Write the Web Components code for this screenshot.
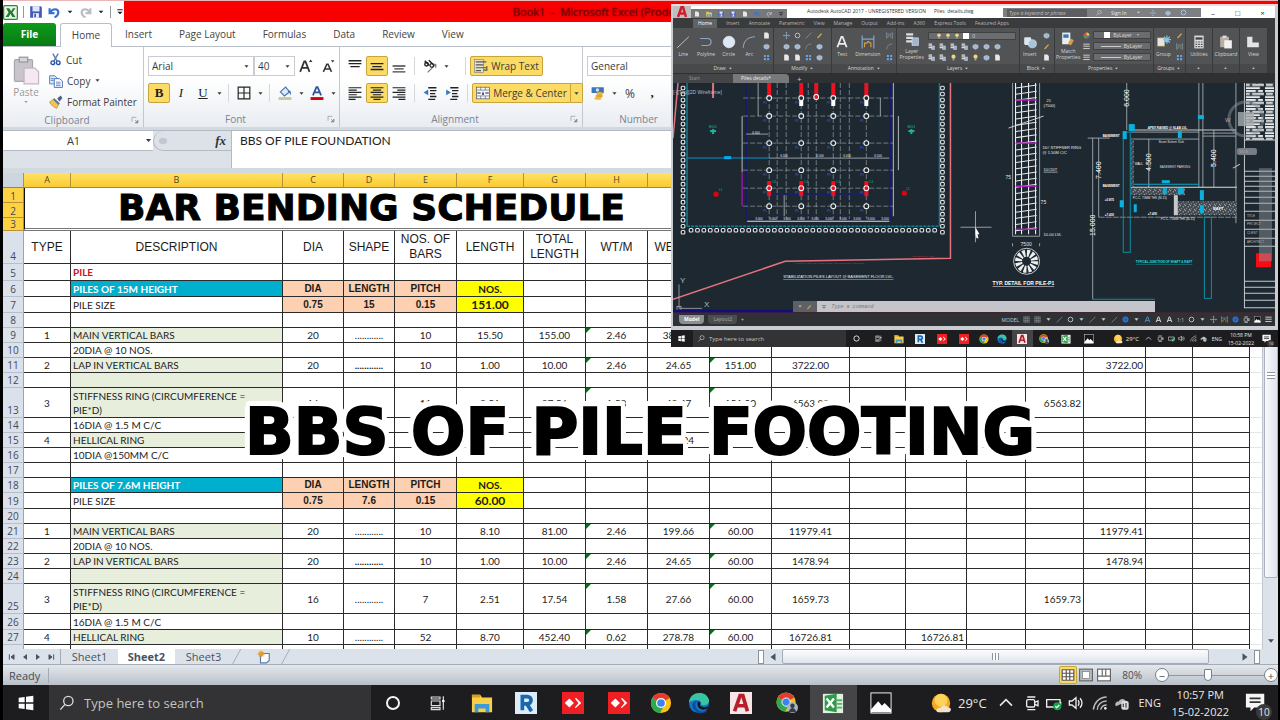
<!DOCTYPE html>
<html lang="en">
<head>
<meta charset="utf-8">
<title>Book1 - Microsoft Excel</title>
<style>
  body {
    margin: 0;
    padding: 0 2px 0 3px;
    box-sizing: border-box;
    height: 100vh;
    position: relative;
    display: flex;
    flex-direction: column;
    overflow: hidden;
    background: #000;
    font-family: "Open Sans", "Noto Sans", sans-serif;
    font-size: 10px;
    color: #3c3c3c;
  }
  sheet-grid { flex: 1; min-height: 0; }
</style>
</head>
<body>
  <title-bar></title-bar>
  <excel-ribbon></excel-ribbon>
  <formula-bar></formula-bar>
  <sheet-grid></sheet-grid>
  <sheet-tabs></sheet-tabs>
  <status-bar></status-bar>
  <task-bar time="10:57 PM"></task-bar>
  <cad-window></cad-window>
  <banner-title>BBS OF PILE FOOTING</banner-title>

<script>
const ICONS = {
  excel: '<rect x="1" y="1" width="22" height="22" rx="2" fill="#e9f5e4" stroke="#2c8a3c" stroke-width="2"/><path d="M5 5h5l3 5 3-5h4l-5 7 5 7h-5l-3-5-3 5H4l5-7z" fill="#1f7a32"/>',
  save: '<path d="M2 2h18l2 2v18H2z" fill="#4558b8"/><rect x="6" y="2" width="12" height="9" fill="#dfe6fa"/><rect x="7" y="14" width="10" height="8" fill="#e8eeff"/><rect x="9" y="15" width="3" height="6" fill="#4558b8"/>',
  undo: '<path d="M3 4v9h9M4 12C8 4 19 4 19 12c0 5-3 7-7 9" fill="none" stroke="#3a6fd0" stroke-width="4"/>',
  redo: '<path d="M21 4v9h-9M20 12C16 4 5 4 5 12c0 5 3 7 7 9" fill="none" stroke="#b9bdc4" stroke-width="4"/>',
  down: '<path d="M5 8h14l-7 8z" fill="currentColor"/>',
  more: '<path d="M4 4h16v3H4zM4 11h16l-8 8z" fill="currentColor"/>',
  paste: '<rect x="2" y="3" width="15" height="18" rx="1" fill="#c8c4cc" stroke="#aaa6b0"/><rect x="6" y="1" width="7" height="4" fill="#d8d6dc" stroke="#99959f"/><path d="M10 10h9l3 3v10H10z" fill="#f4e9f3" stroke="#c3b6c6"/>',
  cut: '<path d="M7 1l8 14M17 1L9 15" stroke="#5c7fae" stroke-width="2.6"/><circle cx="7" cy="18" r="3.4" fill="none" stroke="#2456a8" stroke-width="2.6"/><circle cx="17" cy="18" r="3.4" fill="none" stroke="#2456a8" stroke-width="2.6"/>',
  copy: '<path d="M1 3h9l4 4v10H1z" fill="#dbe8fb" stroke="#4a78be" stroke-width="1.5"/><path d="M9 8h9l5 4v11H9z" fill="#fff" stroke="#3867b4" stroke-width="1.5"/><path d="M12 14h8M12 17h8M12 20h8M3 8h5M3 11h5" stroke="#4a78be" stroke-width="1.4"/>',
  painter: '<path d="M14 6l6-5 3 4-5 6z" fill="#4b5f96"/><path d="M9 6l9 8-5 9C8 21 3 17 1 12z" fill="#f2c64c" stroke="#a67a20"/><path d="M9 6l9 8-2 3-9-9z" fill="#5c75b5"/>',
  border: '<path d="M2 2h20v20H2zM12 2v20M2 12h20" fill="none" stroke="#222" stroke-width="2"/>',
  fill: '<path d="M4 10l9-8 7 8-9 7z" fill="#dfeaf8" stroke="#4a74ae" stroke-width="2"/><path d="M18 7c4 1 5 4 4 9-2-3-2-6-5-6z" fill="#3b78c4"/><rect x="1" y="19" width="22" height="5" fill="#cdc79a"/>',
  fontcolor: '<path d="M5 16L11 2h2l6 14M8 11h8" fill="none" stroke="#2f5597" stroke-width="3"/><rect x="1" y="19" width="22" height="5" fill="#d9000d"/>',
  grow: '<path d="M2 22L9 4h2l7 18M5 15h10" fill="none" stroke="#333" stroke-width="3"/><path d="M17 5l3-4 3 4z" fill="#333"/>',
  shrink: '<path d="M4 22l6-13h2l6 13M7 17h8" fill="none" stroke="#333" stroke-width="2.6"/><path d="M17 2h6l-3 4z" fill="#333"/>',
  top: '<path d="M1 3h22M1 8h22M4 13h16" stroke="#222" stroke-width="2.4"/>',
  middle: '<path d="M1 8h22M4 13h16M1 18h22" stroke="#222" stroke-width="2.4"/>',
  bottom: '<path d="M1 12h22M4 17h16M1 22h22" stroke="#444" stroke-width="2.4"/>',
  left: '<path d="M1 3h22M1 7h14M1 11h22M1 15h14M1 19h22M1 23h12" stroke="#222" stroke-width="2"/>',
  center: '<path d="M1 3h22M5 7h14M1 11h22M5 15h14M1 19h22M6 23h12" stroke="#222" stroke-width="2"/>',
  right: '<path d="M1 3h22M9 7h14M1 11h22M9 15h14M1 19h22M11 23h12" stroke="#222" stroke-width="2"/>',
  orient: '<path d="M8 23L22 9m0 0v6m0-6h-6" fill="none" stroke="#777" stroke-width="2"/><circle cx="6" cy="9" r="3" fill="none" stroke="#222" stroke-width="2.4"/><path d="M3 3l8 8M10 2l7 7" stroke="#222" stroke-width="2.4"/><circle cx="15" cy="11" r="3" fill="none" stroke="#222" stroke-width="2"/>',
  outdent: '<path d="M9 3h14M12 8h11M12 13h9M12 18h11M9 23h12" stroke="#222" stroke-width="2.4"/><path d="M9 6v10l-8-5z" fill="#3777b8"/>',
  indent: '<path d="M9 3h14M12 8h11M12 13h9M12 18h11M9 23h12" stroke="#222" stroke-width="2.4"/><path d="M2 6v10l8-5z" fill="#3777b8"/>',
  wrap: '<rect x="1" y="1" width="15" height="22" fill="#e8e3cc" stroke="#777"/><path d="M3 5h18M3 10h13M3 15h18M3 20h9" stroke="#555" stroke-width="2"/><path d="M22 12v7h-6" fill="none" stroke="#555" stroke-width="2"/>',
  merge: '<rect x="1" y="2" width="22" height="20" fill="#f6f8fc" stroke="#345"/><path d="M1 7h22M1 17h22M8 2v5M16 2v5M8 17v5M16 17v5" stroke="#456"/><path d="M2 12h6M16 12h6" stroke="#224" stroke-width="2"/><path d="M10 15l2-6 2 6z" fill="#225"/>',
  currency: '<rect x="1" y="2" width="21" height="10" rx="1" fill="#3c74bd"/><circle cx="11" cy="7" r="3" fill="#cfe0f8"/><ellipse cx="15" cy="13" rx="6" ry="2.6" fill="#f0b93c"/><ellipse cx="14" cy="17" rx="6" ry="2.6" fill="#e3a526"/><ellipse cx="12" cy="21" rx="6" ry="2.6" fill="#f0b93c"/>',
  launch: '<path d="M3 17V4h13" fill="none" stroke="#8a929c" stroke-width="2"/><path d="M21 12v9h-9zM12 12l6 6" fill="#8a929c" stroke="#8a929c" stroke-width="2"/>',
  windows: '<path d="M1 4l9-1v8H1zM12 2.600l11-1.600v10H12zM1 13h9v8l-9-1zM12 13h11v10l-11-1.600z" fill="#fff"/>',
  search: '<circle cx="14" cy="9" r="7" fill="none" stroke="#ddd" stroke-width="2"/><path d="M9 14l-7 8" stroke="#ddd" stroke-width="2"/>',
  cortana: '<circle cx="12" cy="12" r="9" fill="none" stroke="#f2f2f2" stroke-width="3"/>',
  taskview: '<path d="M2 3h13v3H2zM2 9h13v7H2zM2 19h13v3H2z" fill="none" stroke="#ddd" stroke-width="1.800"/><path d="M20 2v20" stroke="#ddd" stroke-width="1.800"/><circle cx="20" cy="9" r="2" fill="#fff"/>',
  folder: '<path d="M1 3h9l2 3h11v16H1z" fill="#f9cf4a"/><path d="M1 3h9v3H1z" fill="#d99c1d"/><path d="M4 22v-9h16v9h-4v-4H8v4z" fill="#3d9ad6"/>',
  revit: '<rect width="24" height="24" fill="#dcecf9"/><path d="M8 20V5h5.500a4 4 0 010 8H9m4 0l5 8" fill="none" stroke="#1b67ad" stroke-width="4"/>',
  anydesk: '<rect width="24" height="24" fill="#f01f24"/><path d="M8 7l5 5-5 5-5-5z" fill="#fff"/><path d="M14 7l1.500-.5L21 12l-6 5.500-1-.5 4-5z" fill="#fff"/>',
  chrome: '<circle cx="12" cy="12" r="11" fill="#fbc116"/><path d="M12 12L2.500 6.500A11 11 0 0121.500 6.500z" fill="#e33b2e"/><path d="M12 12L2.500 6.500A11 11 0 0011 23l5-9z" fill="#2da94f"/><circle cx="12" cy="12" r="5.500" fill="#fff"/><circle cx="12" cy="12" r="4.200" fill="#3c82f0"/>',
  profile: '<circle cx="11" cy="11" r="10.500" fill="#fbc116"/><path d="M11 11L2 6A10.500 10.500 0 0120 6z" fill="#e33b2e"/><path d="M11 11L2 6a10.500 10.500 0 008 15.500l4-8z" fill="#2da94f"/><circle cx="11" cy="11" r="4.500" fill="#3c82f0" stroke="#fff"/><circle cx="18" cy="17" r="6" fill="#aab6c4"/><circle cx="18" cy="15" r="2.400" fill="#343c48"/><path d="M14 22c1-6 7-6 8 0z" fill="#343c48"/>',
  edge: '<circle cx="12" cy="12" r="11" fill="#1574c8"/><path d="M1 11C3-2 21-2 23 9c0 5-5 6-9 5 2-4-3-8-13-3z" fill="#38c5a0"/><path d="M8 14c1 7 7 9 13 6-4 6-14 3-16-4-1-4 2-7 5-6-1 1-2 2-2 4z" fill="#0b4f9c"/><path d="M11 10c3 1 3 3 2 5 3 2 7 2 10 0-2 5-9 6-12 1-1-2-1-4 0-6z" fill="#15191f"/>',
  autocad: '<rect width="24" height="24" fill="#f6e6e6"/><path d="M5 21L11 4h3l5 17M7 15h10" fill="none" stroke="#b3202c" stroke-width="4"/>',
  cadlogo: '<path d="M4 22L11 2h3l6 20M7 15h10" fill="none" stroke="#d01f2c" stroke-width="5"/>',
  sheets: '<path d="M1 2h22v21H1z" fill="#dff1df"/><path d="M3 4l13-2v20L3 20z" fill="#2e9b48"/><path d="M5 7l8 10M13 7L5 17" stroke="#fff" stroke-width="2.600"/><path d="M16 9h6M16 13h6M16 17h6" stroke="#5bb06b" stroke-width="2"/>',
  photos: '<rect x="1" y="1" width="22" height="22" fill="#16181c" stroke="#fff"/><path d="M1 22v-3l8-9 4 5 3-3 7 7v3z" fill="#fff"/>',
  sun: '<circle cx="12" cy="12" r="10" fill="#f6a91e"/><circle cx="12" cy="9" r="7" fill="#ffd25a"/><path d="M12 17c2-3 6-3 8 0h1c3 1 2 5-1 5H9c-3 0-3-5 3-5z" fill="#f1e4c8"/>',
  chevron: '<path d="M3 16l9-9 9 9" fill="none" stroke="#e8e8e8" stroke-width="2.400"/>',
  camera: '<rect x="4" y="7" width="12" height="11" rx="2" fill="none" stroke="#eee" stroke-width="2"/><path d="M16 11l5-2v7l-5-2M5 3h12M5 22h12" fill="none" stroke="#eee" stroke-width="2"/>',
  battery: '<path d="M1 7h20v11H1zM22 10v5" fill="none" stroke="#eee" stroke-width="2"/><circle cx="17" cy="17" r="6" fill="#18a04a"/><path d="M14 17l2 2 4-4" fill="none" stroke="#fff" stroke-width="2"/>',
  sound: '<path d="M2 9h4l6-5v16l-6-5H2z" fill="none" stroke="#eee" stroke-width="2"/><path d="M15 8c2 2 2 6 0 8M18 5c4 4 4 10 0 14" fill="none" stroke="#eee" stroke-width="2"/>',
  wifi: '<path d="M2 22C3 12 11 3 22 3M8 22c0-7 6-13 14-13M13 22c1-4 4-7 9-7" fill="none" stroke="#bbb" stroke-width="2.200"/><circle cx="20" cy="20" r="2" fill="#eee"/>',
  cloud: '<path d="M3 17c-3-4 1-8 4-7 2-6 10-5 11 0" fill="#b8b8b8"/><rect x="11" y="9" width="11" height="13" rx="3" fill="#ddd"/><path d="M14 13v5M18 12v7" stroke="#555" stroke-width="2"/>',
  notice: '<path d="M1 2h20v15H10l-4 4v-4H1z" fill="#f5f5f5"/><path d="M5 7h12M5 11h12" stroke="#333" stroke-width="2"/>',
  first: '<path d="M4 4v16M18 5v14l-9-7z" fill="currentColor" stroke="currentColor" stroke-width="3"/>',
  prev: '<path d="M18 3v18L6 12z" fill="currentColor"/>',
  next: '<path d="M6 3v18l12-9z" fill="currentColor"/>',
  last: '<path d="M20 4v16M6 5v14l9-7z" fill="currentColor" stroke="currentColor" stroke-width="3"/>',
  newsheet: '<path d="M6 6h15v12l-5 4H6z" fill="#fff" stroke="#5a79b4" stroke-width="2"/><path d="M7 1v12M1 7h12M3 3l8 8M11 3l-8 8" stroke="#e69a28" stroke-width="2"/>',
  slant: '<path d="M1 24L14 0" stroke="#a4abb6" stroke-width="1.500"/>',
  normal: '<path d="M2 3h20v18H2zM2 9h20M2 15h20M9 3v18M15 3v18" fill="#fff" stroke="#555" stroke-width="2"/>',
  page: '<rect x="1" y="2" width="22" height="20" fill="#b8bcc4" stroke="#666" stroke-width="2"/><rect x="6" y="6" width="12" height="12" fill="#fff" stroke="#666"/>',
  breaks: '<rect x="1" y="2" width="22" height="20" fill="#fff" stroke="#666" stroke-width="2"/><path d="M9 2v12M15 2v12M1 14h22" stroke="#666" stroke-width="2"/>',
  line: '<path d="M2 22L22 3" stroke="#ccc" stroke-width="1.500"/>',
  polyline: '<path d="M2 6h12c9 0 9 12 0 12H4" fill="none" stroke="#8ba6c4" stroke-width="2"/>',
  circle: '<circle cx="12" cy="12" r="10" fill="#dce8f5" stroke="#fff"/>',
  arc: '<path d="M2 22C3 9 10 4 22 3" fill="none" stroke="#9ab2cc" stroke-width="1.600"/>',
  letter: '<path d="M4 21L11 3h2l7 18M7 15h10" fill="none" stroke="#eee" stroke-width="3"/>',
  person: '<path d="M4 21L11 3h2l7 18M7 15h10" fill="none" stroke="#4a9ae0" stroke-width="3"/>',
  dimension: '<path d="M2 1v22M22 1v22M2 7h20" fill="none" stroke="#7da7cf" stroke-width="2"/><path d="M6 21v-7h4l2-3 5 3v7" fill="none" stroke="#d89d3c" stroke-width="2"/>',
  layers: '<path d="M2 2h12v4H2zM2 8h12v4H2zM2 14h12v4H2z" fill="#ddd"/><path d="M12 10h11v13H12z" fill="#9db6d2" stroke="#eee"/>',
  insert: '<rect x="2" y="4" width="12" height="13" rx="2" fill="#dce6f0"/><circle cx="16" cy="15" r="7" fill="#a7c3de" stroke="#eee"/>',
  match: '<rect x="2" y="1" width="14" height="20" fill="#e9eef4"/><rect x="4" y="4" width="9" height="6" fill="#3d77b5"/><path d="M12 19l5-8 5 3-5 9z" fill="#d6a04a"/>',
  group: '<rect x="1" y="5" width="12" height="14" fill="#e6e6e6" stroke="#d0a84a"/><path d="M17 1v14M10 8h14M12 3l10 10M22 3L12 13" stroke="#7ec8f0" stroke-width="2"/>',
  calc: '<rect x="4" y="1" width="16" height="22" fill="#ddd"/><path d="M6 4h12v4H6z" fill="#445"/><path d="M6 12h12M6 16h12M6 20h12" stroke="#555" stroke-width="2" stroke-dasharray="3 1.500"/>',
  clip: '<rect x="2" y="3" width="15" height="18" fill="#b8aea4"/><rect x="6" y="1" width="7" height="4" fill="#ddd"/><path d="M9 9h13v14H9z" fill="#f2f2f2"/>',
  view: '<path d="M2 3h9v10h11v8H2z" fill="#e4e4e4"/>',
  cube: '<path d="M3 8l9-4 9 4v9l-9 5-9-5z" fill="#9fb9d4" stroke="#e8eef5"/>',
  doc: '<path d="M4 2h11l5 5v15H4z" fill="#e8e8e8"/>',
  pencil: '<path d="M3 20L17 4l4 3L8 21z" fill="#d2a24c"/>',
  move: '<path d="M12 1v22M1 12h22M9 4l3-3 3 3M9 20l3 3 3-3M4 9l-3 3 3 3M20 9l3 3-3 3" fill="none" stroke="#9cc0e2" stroke-width="2"/>',
  ring: '<circle cx="12" cy="12" r="8" fill="none" stroke="#b6cde4" stroke-width="3"/>',
  bulb: '<circle cx="12" cy="9" r="7" fill="#f3d778"/><rect x="9" y="15" width="6" height="7" fill="#aaa"/>',
  grid: '<path d="M3 3h7v7H3zM14 3h7v7h-7zM3 14h7v7H3zM14 14h7v7h-7z" fill="#6ba4dc"/>',
  snap: '<path d="M3 2v20M9 2v20M15 2v20M21 2v20M2 3h20M2 9h20M2 15h20M2 21h20" stroke="#8c8f92" stroke-width="2"/>',
  lines: '<path d="M1 4h22M1 11h22M1 19h22" stroke="#ddd" stroke-width="3"/>',
  blue: '<circle cx="12" cy="12" r="9" fill="#1b62c4" stroke="#2b85f0" stroke-width="3"/>',
  wheel: '<circle cx="12" cy="12" r="10" fill="#d94b40"/><path d="M12 12L2 12A10 10 0 0012 22z" fill="#4ba04d"/><path d="M12 12v10a10 10 0 0010-10z" fill="#3d78d0"/><path d="M12 2a10 10 0 0110 10H12z" fill="#f3c43a"/>'
};

const icon = (name, size) =>
  `<svg class="i" viewBox="0 0 24 24" aria-hidden="true"${size ? ` style="width:${size}px;height:${size}px"` : ''}>${ICONS[name]}</svg>`;

const BASE = `
  :host, * { box-sizing: border-box; }
  button, input, select, textarea {
    font: inherit; color: inherit; margin: 0; padding: 0;
    border: 0; background: none; border-radius: 0; outline: 0;
  }
  select { appearance: none; }
  .i { width: 14px; height: 14px; flex: none; display: block; }
`;

class UiElement extends HTMLElement {
  constructor() {
    super();
    this.attachShadow({ mode: 'open' });
  }

  connectedCallback() {
    this.shadowRoot.innerHTML = `<style>${BASE}${this.css()}</style>${this.html()}`;
  }
}

// Title bar with the quick access tools
class TitleBar extends UiElement {
  css() {
    return `
      :host { display: flex; height: 23px; background: #fff; border-top: 1px solid #e9b5b5; }
      .tools { width: 121px; display: flex; align-items: center; gap: 5px; color: #222; }
      .bar { width: 1px; height: 12px; background: #999; }
      .title {
        flex: 1; height: 21px; padding-left: 389px; background: #f80000; color: #780000;
        font: 11px/22px "Open Sans", sans-serif; white-space: nowrap; text-shadow: 0 0 2px #780000;
      }
    `;
  }

  html() {
    return `
      <div class="tools">${icon('excel', 15)}<span class="bar"></span>${icon('save')}${icon('undo', 13)}${icon('down', 8)}${icon('redo', 13)}${icon('down', 8)}<span class="bar"></span>${icon('more', 8)}</div>
      <div class="title">Book1 &nbsp;- &nbsp;Microsoft Excel (Product Activation Failed)</div>
    `;
  }
}

// One captioned block of ribbon tools
class RibbonGroup extends UiElement {
  css() {
    return `
      :host { display: flex; flex-direction: column; flex: none; border-right: 1px solid #c3c8cf; }
      .body { flex: 1; display: flex; }
      .foot { height: 17px; display: flex; align-items: center; padding-right: 4px; color: #7b8594; }
      .name { flex: 1; text-align: center; }
    `;
  }

  html() {
    return `
      <div class="body"><slot></slot></div>
      <div class="foot"><span class="name">${this.getAttribute('label')}</span>${icon('launch', 8)}</div>
    `;
  }
}

class ExcelRibbon extends UiElement {
  css() {
    return `
      :host { display: block; background: #fff; }
      nav { display: flex; height: 24px; align-items: stretch; border-bottom: 1px solid #b9bfc8; }
      nav a { color: #444; text-decoration: none; line-height: 23px; text-align: center; }
      .file { width: 53px; margin-right: 4px; background: linear-gradient(#0e9a1c, #087a12); color: #fff; font-weight: bold; border-radius: 3px 3px 0 0; }
      .home { width: 52px; border: 1px solid #b9bfc8; border-bottom: 0; border-radius: 3px 3px 0 0; background: #fff; height: 24px; }
      .tabs { display: flex; gap: 27px; padding-left: 13px; }
      .groups { display: flex; height: 80px; background: linear-gradient(#fff 40%, #e9ecf1); }
      button { display: flex; align-items: center; justify-content: center; gap: 3px; height: 20px; white-space: nowrap; }
      .paste { width: 46px; height: 60px; flex-direction: column; margin-top: 3px; color: #999; gap: 0; }
      .clip { display: flex; flex-direction: column; padding-top: 2px; }
      .clip button { justify-content: flex-start; gap: 4px; height: 21px; }
      .tools { display: flex; flex-direction: column; gap: 7px; padding: 9px 4px 0 4px; }
      .row { display: flex; height: 20px; align-items: center; }
      .row button { width: 22px; }
      .row button.tiny { width: 10px; }
      .row button.on { background: #fbdb63; border: 1px solid #c9a33c; border-radius: 2px; }
      .row button.wide { width: 73px; }
      .row button.merge { width: 99px; border-radius: 2px 0 0 2px; }
      .row button.drop { width: 12px; border-left: 0; border-radius: 0 2px 2px 0; }
      .sep { width: 1px; height: 18px; background: #d4d7dc; margin: 0 4px; }
      .box { display: flex; align-items: center; height: 20px; border: 1px solid #c9cdd3; background: #fff; padding: 0 3px; }
      .box select { flex: 1; min-width: 0; }
      .serif { font: 13px "Liberation Serif", serif; color: #222; }
    `;
  }

  html() {
    const drop = label => `<button class="tiny" aria-label="${label} options">${icon('down', 7)}</button>`;
    const tool = (name, label, on) => `<button class="${on ? 'on' : ''}" aria-label="${label}">${icon(name)}</button>`;
    return `
      <nav>
        <a class="file" href="#">File</a><a class="home" href="#">Home</a>
        <div class="tabs"><a href="#">Insert</a><a href="#">Page Layout</a><a href="#">Formulas</a><a href="#">Data</a><a href="#">Review</a><a href="#">View</a></div>
      </nav>
      <div class="groups">
        <ribbon-group label="Clipboard" style="width:141px">
          <button class="paste">${icon('paste', 29)}<span>Paste</span>${icon('down', 6)}</button>
          <div class="clip">
            <button>${icon('cut', 13)}Cut</button>
            <button>${icon('copy')}Copy ${icon('down', 7)}</button>
            <button>${icon('painter')}Format Painter</button>
          </div>
        </ribbon-group>
        <ribbon-group label="Font" style="width:196px">
          <div class="tools">
            <div class="row">
              <label class="box" style="width:106px"><select aria-label="Font name"><option>Arial</option></select>${icon('down', 7)}</label>
              <label class="box" style="width:41px"><select aria-label="Font size"><option>40</option></select>${icon('down', 7)}</label>
              ${tool('grow', 'Grow font')}${tool('shrink', 'Shrink font')}
            </div>
            <div class="row">
              <button class="on serif"><b>B</b></button><button class="serif"><i>I</i></button><button class="serif"><u>U</u></button>${drop('Underline')}
              <span class="sep"></span>${tool('border', 'Borders')}${drop('Borders')}
              <span class="sep"></span>${tool('fill', 'Fill colour')}${drop('Fill')}${tool('fontcolor', 'Font colour')}${drop('Font colour')}
            </div>
          </div>
        </ribbon-group>
        <ribbon-group label="Alignment" style="width:243px">
          <div class="tools">
            <div class="row">
              ${tool('top', 'Top align')}${tool('middle', 'Middle align', true)}${tool('bottom', 'Bottom align')}
              <span class="sep"></span>${tool('orient', 'Orientation')}${drop('Orientation')}<span style="width:10px"></span>
              <span class="sep"></span><button class="on wide">${icon('wrap')}Wrap Text</button>
            </div>
            <div class="row">
              ${tool('left', 'Align left')}${tool('center', 'Centre', true)}${tool('right', 'Align right')}
              <span class="sep"></span>${tool('outdent', 'Decrease indent')}${tool('indent', 'Increase indent')}
              <span class="sep"></span><button class="on merge">${icon('merge')}Merge &amp; Center</button><button class="on drop" aria-label="Merge options">${icon('down', 7)}</button>
            </div>
          </div>
        </ribbon-group>
        <ribbon-group label="Number" style="width:124px">
          <div class="tools">
            <div class="row"><label class="box" style="width:112px"><select aria-label="Number format"><option>General</option></select>${icon('down', 7)}</label></div>
            <div class="row">${tool('currency', 'Currency')}${drop('Currency')}<button style="font-size:12px">%</button><button class="serif"><b>,</b></button></div>
          </div>
        </ribbon-group>
      </div>
    `;
  }
}

class FormulaBar extends UiElement {
  css() {
    return `
      :host { display: flex; height: 46px; padding: 3px 0 5px; background: #d3d9e1; }
      .name { width: 229px; display: flex; background: #dde2e9; border-right: 1px solid #b4bac3; border-top: 1px solid #b4bac3; }
      .cell { width: 150px; height: 20px; display: flex; align-items: center; background: #fff; border-bottom: 1px solid #b4bac3; }
      .cell input { flex: 1; min-width: 0; text-align: center; font-size: 11px; }
      .fx { flex: 1; height: 20px; display: flex; align-items: center; justify-content: flex-end; padding-right: 5px; border: 1px solid #b4bac3; border-top: 0; border-right: 0; border-radius: 10px 0 0 10px; font: italic bold 13px "Liberation Serif", serif; color: #333; }
      .fx span { flex: 1; margin-left: 5px; max-width: 8px; height: 6px; border-radius: 4px; background: #c2c8d0; margin-right: auto; }
      textarea { flex: 1; resize: none; overflow: hidden; background: #fff; padding: 1px 8px; font: 12px/17px Lato, sans-serif; color: #222; border-top: 1px solid #b4bac3; }
    `;
  }

  html() {
    return `
      <div class="name">
        <label class="cell"><input aria-label="Name box" value="A1">${icon('down', 9)}</label>
        <div class="fx"><span></span>fx</div>
      </div>
      <textarea aria-label="Formula">BBS OF PILE FOUNDATION</textarea>
    `;
  }
}

const COLUMNS = [47, 212, 61, 51, 62, 67, 62, 62, 62, 62, 78, 56, 61, 59, 58, 62, 47, 57];

// row number: [height, { column: value }]
const ROWS = {
  4: [33, { A: 'TYPE', B: 'DESCRIPTION', C: 'DIA', D: 'SHAPE', E: 'NOS. OF BARS', F: 'LENGTH', G: 'TOTAL LENGTH', H: 'WT/M', I: 'WEIGHT' }],
  5: [17, { B: 'PILE' }],
  6: [16, { B: 'PILES OF 15M HEIGHT', C: 'DIA', D: 'LENGTH', E: 'PITCH', F: 'NOS.' }],
  7: [16, { B: 'PILE SIZE', C: '0.75', D: '15', E: '0.15', F: '151.00' }],
  8: [15, {}],
  9: [15, { A: 1, B: 'MAIN VERTICAL BARS', C: 20, D: '............', E: 10, F: '15.50', G: '155.00', H: '2.46', I: '382.08' }],
  10: [15, { B: '20DIA @ 10 NOS.' }],
  11: [15, { A: 2, B: 'LAP IN VERTICAL BARS', C: 20, D: '............', E: 10, F: '1.00', G: '10.00', H: '2.46', I: '24.65', J: '151.00', K: '3722.00', P: '3722.00' }],
  12: [15, {}],
  13: [30, { A: 3, B: 'STIFFNESS RING (CIRCUMFERENCE = PIE*D)', C: 16, D: '............', E: 11, F: '2.51', G: '27.56', H: '1.58', I: '43.47', J: '151.00', K: '6563.82', O: '6563.82' }],
  14: [15, { B: '16DIA @ 1.5 M C/C' }],
  15: [15, { A: 4, B: 'HELLICAL RING', I: '550.24' }],
  16: [15, { B: '10DIA @150MM C/C' }],
  17: [15, {}],
  18: [15, { B: 'PILES OF 7.6M HEIGHT', C: 'DIA', D: 'LENGTH', E: 'PITCH', F: 'NOS.' }],
  19: [16, { B: 'PILE SIZE', C: '0.75', D: '7.6', E: '0.15', F: '60.00' }],
  20: [15, {}],
  21: [15, { A: 1, B: 'MAIN VERTICAL BARS', C: 20, D: '............', E: 10, F: '8.10', G: '81.00', H: '2.46', I: '199.66', J: '60.00', K: '11979.41', P: '11979.41' }],
  22: [15, { B: '20DIA @ 10 NOS.' }],
  23: [15, { A: 2, B: 'LAP IN VERTICAL BARS', C: 20, D: '............', E: 10, F: '1.00', G: '10.00', H: '2.46', I: '24.65', J: '60.00', K: '1478.94', P: '1478.94' }],
  24: [15, {}],
  25: [30, { A: 3, B: 'STIFFNESS RING (CIRCUMFERENCE = PIE*D)', C: 16, D: '............', E: 7, F: '2.51', G: '17.54', H: '1.58', I: '27.66', J: '60.00', K: '1659.73', O: '1659.73' }],
  26: [16, { B: '16DIA @ 1.5 M C/C' }],
  27: [15, { A: 4, B: 'HELLICAL RING', C: 10, D: '............', E: 52, F: '8.70', G: '452.40', H: '0.62', I: '278.78', J: '60.00', K: '16726.81', M: '16726.81' }]
};
const GREEN = [9, 11, 12, 13, 15, 21, 23, 24, 25, 27];
const FLAGGED = [9, 11, 13, 21, 23, 25, 27];

class SheetGrid extends UiElement {
  css() {
    return `
      :host { display: flex; background: #fff; overflow: hidden; }
      .pane { flex: 1; min-width: 0; overflow: hidden; }
      table { width: 100%; table-layout: fixed; border-collapse: separate; border-spacing: 0; }
      th, td { padding: 0 2px; overflow: hidden; }
      thead th { height: 15px; background: linear-gradient(#ffe263, #fbcb34); border-right: 1px solid #b8923a; border-bottom: 1px solid #a98532; font-size: 9px; line-height: 14px; font-weight: normal; color: #554726; }
      thead th:first-child { background: #cdd5df; }
      tbody th { background: #dae1ea; border-right: 1px solid #9aa3b0; border-bottom: 1px solid #b6bec9; font-weight: normal; font-size: 10px; line-height: 13px; color: #414a58; vertical-align: bottom; padding: 0; }
      tbody th.on { background: #fdd344; border-color: #b8923a; line-height: 12px; }
      td { border-right: 1px solid #2b2b2b; border-bottom: 1px solid #2b2b2b; text-align: center; vertical-align: middle; font: 10px/14px Lato, sans-serif; color: #1c1c1c; white-space: nowrap; }
      td.B { text-align: left; white-space: normal; padding-right: 16px; }
      td.L, td.M, td.N, td.O, td.P { text-align: right; }
      td.rest { border-right: 0; border-bottom-color: #e4e6ea; }
      td.title { border: 1px solid #111; border-bottom: 3px double #777; border-top: 0; text-align: left; padding-left: 93px; font: bold 36px/38px "DejaVu Sans", sans-serif; -webkit-text-stroke: 1px #000; color: #000; }
      .r4 td, .r4 td.B { font: 12px/15px "Liberation Sans", sans-serif; white-space: normal; text-align: center; padding: 0 2px; }
      .r5 td.B { color: #d01018; font-weight: bold; }
      .head td.C, .head td.D, .head td.E { background: #fcd0b0; font-weight: bold; font-family: "Liberation Sans", sans-serif; }
      .head td.F { background: #ff0; font-weight: bold; }
      .size td.F { font-size: 12px; }
      .name td.B { background: #00aecd; color: #fff; font-weight: bold; }
      .green td.B { background: #e8eedc; }
      .flag td.H, .flag td.J { background: linear-gradient(135deg, #0c6b1c 3px, transparent 4px); }
      .r11 td.D, .r23 td.D { font-weight: bold; }
      .scroll { width: 16px; flex: none; display: flex; flex-direction: column; align-items: center; background: #dde2ea; border-left: 1px solid #c0c6d0; color: #445; }
      .thumb { width: 14px; height: 85%; display: flex; align-items: center; justify-content: center; background: linear-gradient(90deg, #f8f9fc, #dfe4ee); border: 1px solid #aab2c0; border-radius: 2px; }
      .grip { width: 8px; height: 7px; background: repeating-linear-gradient(#8c94a2 0 1px, #fff 1px 3px); }
      .scroll .i { margin-top: auto; margin-bottom: 3px; }
    `;
  }

  html() {
    const letters = COLUMNS.map((w, i) => String.fromCharCode(65 + i));
    const rows = Object.entries(ROWS).map(([n, [height, cells]]) => {
      const row = Number(n);
      const cls = [`r${n}`];
      if ([6, 7, 18, 19].includes(row)) cls.push('head');
      if ([7, 19].includes(row)) cls.push('size');
      if ([6, 18].includes(row)) cls.push('name');
      if (GREEN.includes(row)) cls.push('green');
      if (FLAGGED.includes(row)) cls.push('flag');
      const tds = letters.map(l => `<td class="${l}">${cells[l] ?? ''}</td>`).join('');
      return `<tr class="${cls.join(' ')}" style="height:${height}px"><th>${n}</th>${tds}<td class="rest"></td></tr>`;
    }).join('');
    return `
      <div class="pane"><table>
        <colgroup><col style="width:21px">${COLUMNS.map(w => `<col style="width:${w}px">`).join('')}<col></colgroup>
        <thead><tr><th></th>${letters.map(l => `<th>${l}</th>`).join('')}<th></th></tr></thead>
        <tbody>
          <tr style="height:15px"><th class="on">1</th><td class="title" rowspan="3" colspan="18">BAR BENDING SCHEDULE</td></tr>
          <tr style="height:15px"><th class="on">2</th></tr>
          <tr style="height:13px"><th class="on">3</th></tr>
          ${rows}
          <tr style="height:15px"><th></th>${letters.map(l => `<td class="${l}"></td>`).join('')}<td class="rest"></td></tr>
        </tbody>
      </table></div>
      <div class="scroll"><div class="thumb"><span class="grip"></span></div>${icon('down', 10)}</div>
    `;
  }
}

class SheetTabs extends UiElement {
  css() {
    return `
      :host { display: flex; height: 16px; background: #dbe2ea; color: #4a5260; border-bottom: 1px solid #a4abb6; }
      .left { flex: 755; display: flex; align-items: stretch; }
      .nav { width: 58px; display: flex; align-items: center; justify-content: space-around; padding: 0 2px; border-right: 1px solid #a4abb6; }
      button { font-size: 11px; line-height: 14px; }
      .tab { width: 57px; }
      .on { background: #fff; font-weight: bold; }
      .new { width: 34px; display: flex; align-items: center; justify-content: center; }
      .right { flex: 520; display: flex; align-items: center; gap: 4px; }
      .split { width: 6px; height: 14px; border: 1px solid #8a93a0; background: #fff; }
      .track { flex: 1; display: flex; }
      .thumb { flex: 0 0 94%; height: 15px; border: 1px solid #a4abb6; border-radius: 2px; background: linear-gradient(#fbfcfe, #dfe4ec); display: flex; align-items: center; justify-content: center; }
      .grip { width: 7px; height: 7px; background: repeating-linear-gradient(90deg, #8c94a2 0 1px, #fff 1px 3px); }
      .end { width: 14px; }
    `;
  }

  html() {
    return `
      <div class="left">
        <div class="nav">${icon('first', 8)}${icon('prev', 8)}${icon('next', 8)}${icon('last', 8)}</div>
        <button class="tab">Sheet1</button><button class="tab on">Sheet2</button><button class="tab">Sheet3</button>${icon('slant', 15)}
        <button class="new" aria-label="Insert sheet">${icon('newsheet', 14)}</button>${icon('slant', 15)}
      </div>
      <div class="right">
        <span class="split"></span>${icon('prev', 10)}
        <div class="track"><div class="thumb"><span class="grip"></span></div></div>
        ${icon('next', 10)}<span class="split"></span><span class="end"></span>
      </div>
    `;
  }
}

class StatusBar extends UiElement {
  css() {
    return `
      :host { display: flex; align-items: center; height: 20px; padding: 0 0 0 6px; background: linear-gradient(#e4e8ed, #b9c0c9); color: #454c56; font-size: 11px; }
      .ready { width: 40px; border-right: 1px solid #a4abb6; margin-right: auto; }
      .view { width: 18px; height: 18px; display: flex; align-items: center; justify-content: center; }
      .on { background: #fbdb63; border: 1px solid #c9a33c; border-radius: 2px; }
      .zoom { margin: 0 13px 0 9px; font-size: 10px; }
      .round { width: 14px; height: 14px; border: 1px solid #777f8a; border-radius: 50%; background: #fff; line-height: 11px; text-align: center; }
      input { width: 95px; height: 14px; appearance: none; background: linear-gradient(#8f97a2, #8f97a2) center / 100% 1px no-repeat; }
      input::-webkit-slider-thumb { appearance: none; width: 8px; height: 12px; border: 1px solid #777f8a; background: #fff; border-radius: 1px 1px 4px 4px; }
    `;
  }

  html() {
    return `
      <span class="ready">Ready</span>
      <button class="view on" aria-label="Normal">${icon('normal')}</button><button class="view" aria-label="Page layout">${icon('page')}</button><button class="view" aria-label="Page breaks">${icon('breaks')}</button>
      <span class="zoom">80%</span>
      <button class="round" aria-label="Zoom out">−</button><input type="range" aria-label="Zoom" min="0" max="100" value="40"><button class="round" aria-label="Zoom in">+</button>
    `;
  }
}

// Windows task bar; the small one sits inside the CAD recording
class TaskBar extends UiElement {
  css() {
    return `
      :host {
        display: grid; height: var(--bar, 35px); background: #1d1c1e; color: #e8e8e8; font-size: var(--text, 13px); align-items: stretch;
        grid-template-columns: 46fr 321fr 45fr 44fr 43fr 46fr 47fr 45fr 38fr 39fr 45fr 46fr 47fr 48fr 47fr 40fr 28fr 23fr 21fr 23fr 24fr 21fr 34fr 67fr 44fr;
      }
      .c { display: flex; align-items: center; justify-content: center; white-space: nowrap; min-width: 0; }
      .c .i { width: var(--icon, 22px); height: var(--icon, 22px); }
      .tray .i, .start .i, .find .i { width: var(--tray, 16px); height: var(--tray, 16px); }
      .sun { justify-content: flex-end; }
      .find { background: #333234; justify-content: flex-start; padding-left: 3%; gap: 3%; overflow: hidden; }
      .find input { width: 70%; }
      .find input::placeholder { color: #c4c4c4; opacity: 1; }
      .lit { background: #454446; }
      .lang { font-size: var(--small, 11px); }
      .time { flex-direction: column; font-size: var(--small, 11px); line-height: var(--line, 17px); }
      .note { position: relative; }
      .count {
        position: absolute; left: 50%; bottom: 0; width: var(--tray, 16px); height: var(--tray, 16px); line-height: var(--tray, 16px);
        text-align: center; font-size: var(--count, 10px); background: #3a393b; border-radius: 50%;
      }
    `;
  }

  html() {
    const apps = ['cortana', 'taskview', 'folder', 'revit', 'anydesk', 'anydesk', 'chrome', 'edge', 'autocad', 'profile', 'sheets', 'photos'];
    const active = this.getAttribute('active') || 'sheets';
    const tray = ['chevron', 'camera', 'battery', 'sound', 'wifi', 'cloud'];
    return `
      <button class="c start" aria-label="Start">${icon('windows')}</button>
      <label class="c find">${icon('search')}<input aria-label="Search" placeholder="Type here to search"></label>
      ${apps.map((a, n) => `<button class="c ${a === active ? 'lit' : ''} ${n < 2 ? 'tray' : ''}" aria-label="${a}">${icon(a)}</button>`).join('')}
      <span class="c sun">${icon('sun')}</span><span class="c">29°C</span>
      ${tray.map(t => `<span class="c tray">${icon(t)}</span>`).join('')}
      <span class="c lang">ENG</span>
      <span class="c time"><span>${this.getAttribute('time')}</span><span>15-02-2022</span></span>
      <span class="c note">${icon('notice')}<span class="count">10</span></span>
    `;
  }
}

class CadPanel extends UiElement {
  css() {
    return `
      :host { display: flex; flex-direction: column; background: #525355; border-right: 1px solid #38393b; min-width: 0; overflow: hidden; }
      .body { flex: 1; display: flex; align-items: center; justify-content: space-around; }
      .foot { height: 9px; line-height: 9px; display: flex; justify-content: center; align-items: center; gap: 2px; background: #48494b; }
    `;
  }

  html() {
    return `
      <div class="body"><slot></slot></div>
      <div class="foot">${this.getAttribute('label')}${icon('down', 5)}</div>
    `;
  }
}

class CadRibbon extends UiElement {
  css() {
    return `
      :host { display: block; background: #3a3b3d; color: #d6d6d6; font-size: 5px; }
      .title { display: flex; height: 12px; background: #fff; color: #333; }
      .logo { width: 18px; background: #bfbfc1; display: flex; align-items: center; justify-content: center; }
      .quick { width: 96px; margin-top: 3px; display: flex; align-items: center; justify-content: space-around; background: #77787a; }
      .name { flex: 1; padding-left: 20px; line-height: 10px; white-space: pre; }
      .find { width: 198px; margin: 2px 0 1px; display: flex; align-items: center; gap: 9px; background: #7e7f82; color: #e6e6e6; padding-left: 4px; }
      .find input { width: 80px; height: 8px; background: #5c5d60; padding-left: 2px; }
      .find input::placeholder { color: #c0c0c0; font-style: italic; opacity: 1; }
      .win { width: 74px; display: flex; justify-content: space-around; align-items: center; font-size: 8px; }
      nav { display: flex; height: 10px; align-items: center; gap: 9px; padding-left: 20px; }
      nav a { color: #b8b8b8; text-decoration: none; line-height: 9px; white-space: nowrap; }
      nav a.on { background: #616264; color: #fff; padding: 0 5px; }
      .panels { display: grid; height: 45px; grid-template-columns: 101fr 58fr 65fr 122fr 35fr 99fr 32fr 27fr 27fr 28fr 7fr; }
      button { display: flex; flex-direction: column; align-items: center; gap: 2px; line-height: 6px; }
      .mini { display: grid; grid-template-columns: repeat(var(--n, 2), 7px); gap: 4px; }
      .col { display: flex; flex-direction: column; gap: 3px; }
      .val { width: 58px; height: 8px; display: flex; align-items: center; justify-content: center; gap: 3px; background: #6b6c6f; border: 1px solid #404143; line-height: 6px; }
      .val select { width: 20px; }
      .sw { width: 6px; height: 6px; background: #fff; }
      .ln { width: 20px; height: 1px; background: #ccc; }
      .files { height: 10px; display: flex; align-items: center; background: #2f3032; }
      .files span { height: 9px; line-height: 9px; width: 60px; padding-left: 16px; background: #444547; color: #999; }
      .files .on { width: 56px; padding-left: 8px; background: #77787a; color: #eee; border-radius: 0 4px 0 0; }
      .files .add { width: 20px; padding-left: 8px; background: none; font-size: 8px; color: #ccc; }
    `;
  }

  html() {
    const tabs = ['Insert', 'Annotate', 'Parametric', 'View', 'Manage', 'Output', 'Add-ins', 'A360', 'Express Tools', 'Featured Apps'];
    const big = (name, label, size = 14) => `<button>${icon(name, size)}<span>${label}</span></button>`;
    const mini = (n, names) => `<div class="mini" style="--n:${n}">${names.map(x => icon(x, 7)).join('')}</div>`;
    return `
      <div class="title">
        <div class="logo">${icon('cadlogo', 12)}</div>
        <div class="quick">${['doc', 'folder', 'save', 'save', 'doc', 'undo', 'redo', 'more'].map(x => icon(x, 6)).join('')}</div>
        <div class="name">Autodesk AutoCAD 2017 - UNREGISTERED VERSION      Piles  details.dwg</div>
        <div class="find"><input aria-label="Help search" placeholder="Type a keyword or phrase">${icon('search', 6)}<span>Sign In</span>${icon('down', 5)}${icon('move', 6)}${icon('cube', 6)}${icon('ring', 7)}</div>
        <div class="win"><span>–</span><span>□</span><span>×</span></div>
      </div>
      <nav><a class="on" href="#">Home</a>${tabs.map(t => `<a href="#">${t}</a>`).join('')}</nav>
      <div class="panels">
        <cad-panel label="Draw">${big('line', 'Line')}${big('polyline', 'Polyline')}${big('circle', 'Circle')}${big('arc', 'Arc')}${mini(1, ['doc', 'cube', 'grid'])}</cad-panel>
        <cad-panel label="Modify">${mini(4, ['move', 'ring', 'line', 'pencil', 'cube', 'cube', 'arc', 'cube', 'doc', 'doc', 'grid', 'cube'])}</cad-panel>
        <cad-panel label="Annotation">${big('letter', 'Text')}${big('dimension', 'Dimension')}${mini(1, ['dimension', 'arc', 'grid'])}</cad-panel>
        <cad-panel label="Layers">${big('layers', 'Layer<br>Properties')}<div class="col"><label class="val" style="width:88px">${icon('bulb', 6)}${icon('bulb', 6)}${icon('bulb', 6)}<span class="sw"></span><select aria-label="Layer" style="width:36px"><option>0</option></select></label>${mini(7, ['layers', 'layers', 'layers', 'layers', 'cube', 'cube', 'cube', 'layers', 'layers', 'bulb', 'layers', 'bulb', 'cube', 'doc'])}</div></cad-panel>
        <cad-panel label="Block">${big('insert', 'Insert')}${mini(1, ['cube', 'pencil', 'doc'])}</cad-panel>
        <cad-panel label="Properties">${big('match', 'Match<br>Properties')}${mini(1, ['wheel', 'lines', 'lines'])}<div class="col">
          <label class="val"><span class="sw"></span><select aria-label="Colour"><option>ByLayer</option></select>${icon('down', 4)}</label>
          <label class="val"><span class="ln"></span><select aria-label="Line weight"><option>ByLayer</option></select></label>
          <label class="val"><span class="ln"></span><select aria-label="Line type"><option>ByLayer</option></select></label></div></cad-panel>
        <cad-panel label="Groups">${big('group', 'Group')}${mini(1, ['pencil', 'dimension', 'grid'])}</cad-panel>
        <cad-panel label="">${big('calc', 'Utilities')}</cad-panel>
        <cad-panel label="">${big('clip', 'Clipboard')}</cad-panel>
        <cad-panel label="">${big('view', 'View')}</cad-panel>
      </div>
      <div class="files"><span>Start</span><span class="on">Piles  details*</span><span class="add">+</span></div>
    `;
  }
}

// Model space: pile layout, pile detail and shaft section
class CadDrawing extends UiElement {
  css() {
    return `
      :host { display: block; background: #1d2831; }
      svg { display: block; width: 100%; }
      text { font-family: "Liberation Sans", sans-serif; }
    `;
  }

  html() {
    let s = '';
    const line = (x1, y1, x2, y2, c = '#c9ced2', w = 0.7, extra = '') => { s += `<path d="M${x1} ${y1}L${x2} ${y2}" stroke="${c}" stroke-width="${w}" fill="none" ${extra}/>`; };
    const rect = (x, y, w, h, fill, stroke = 'none') => { s += `<rect x="${x}" y="${y}" width="${w}" height="${h}" fill="${fill}" stroke="${stroke}"/>`; };
    const text = (x, y, size, str, fill = '#e8e8e8', extra = '') => { s += `<text x="${x}" y="${y}" font-size="${size}" fill="${fill}" ${extra}>${str}</text>`; };
    const dim = (x, y1, y2, ty, str) => {
      line(x, y1, x, y2);
      text(x + 2, ty, 7, str, '#fff', `text-anchor="middle" transform="rotate(-90 ${x + 2} ${ty})"`);
    };

    // retaining piles round the site
    const post = (x, y) => { s += `<rect x="${x - 1.8}" y="${y - 1.8}" width="3.600" height="3.600" rx="1" fill="#111a20" stroke="#e6e6e6" stroke-width="1.100"/>`; };
    line(688, 83, 688, 226, '#0f7e94', 1.5);
    line(940, 83, 940, 226, '#0f7e94', 1.5);
    line(688, 226, 940, 226, '#0f7e94', 1.5, 'stroke-dasharray="3 1"');
    for (let y = 88; y < 233; y += 6) { post(684, y); post(943, y); }
    for (let x = 692; x < 940; x += 6.4) post(x, 230);

    // column grid
    rect(747, 80, 144, 139, 'none', '#15157e');
    for (const x of [770, 778, 787, 802, 809, 817, 834, 841, 850, 867]) line(x, 83, x, 219, '#a8b0b5', 0.6, 'stroke-dasharray="5 2"');
    for (const y of [98, 116, 143, 170, 188, 206]) line(744, y, 894, y, '#a8b0b5', 0.6, 'stroke-dasharray="5 2"');
    line(688, 158, 770, 158, '#0e8fd0', 1);
    rect(725, 156, 7, 3, '#08a9e8');
    line(770, 158, 890, 158);
    line(748, 221, 890, 221, '#ddd', 1);
    line(743, 116, 743, 172, '#ddd', 0.8);
    line(743, 172, 743, 206, '#8d1a9c', 1.6);
    line(899, 116, 899, 170, '#ddd', 0.8);
    line(894, 83, 894, 216, '#ddd', 0.8);
    line(759, 83, 759, 116);
    line(881, 98, 881, 116);
    line(747, 134, 769, 134);
    line(785, 195, 785, 216);
    line(770, 194, 870, 194, '#1b1b90', 0.8);
    for (const [x, y] of [[757, 134], [785, 157], [821, 157], [848, 157], [879, 157]]) text(x - 4, y, 3, '6.500');
    for (let x = 756; x < 884; x += 14) text(x, 220, 3, '3.000');
    for (const x of [770, 802, 834, 867]) {
      rect(x - 2, 181, 4, 15, '#f01020');
      rect(x - 2, 83, 4, 15, '#f01020');
      if (x > 770) rect(x - 2, 96, 4, 10, '#fff');
      for (const y of [98, 116, 143, 170, 188, 206]) {
        s += `<circle cx="${x}" cy="${y}" r="2.400" fill="${y === 188 ? '#f01020' : '#1d2831'}" stroke="#f0f0f0" stroke-width="1.100"/>`;
        text(x - 6, y + 6, 3, 'P1', '#3a62e8');
      }
      text(x + 3, 183, 3, 'C4', '#0fbf8c');
    }
    rect(815, 83, 4, 13, '#f01020');
    s += '<circle cx="817" cy="97" r="2.400" fill="#f01020" stroke="#fff"/>';
    for (const x of [714, 912]) {
      text(x - 4, 128, 4, 'BG1', '#14b89c');
      line(x - 3, 131, x + 3, 131, '#14b89c', 2);
      line(x, 129, x, 134, '#14b89c', 2);
    }
    s += '<circle cx="717" cy="194" r="2.600" fill="#d40812"/><circle cx="905" cy="193" r="2.600" fill="#d40812"/>';
    text(720, 191, 3, 'L1', '#14b89c');
    text(907, 190, 3, 'L1', '#14b89c');

    // site boundary
    s += '<path d="M951 83V258L786 261 674 299M679 83l-5 55" fill="none" stroke="#e5737d" stroke-width="1.500"/>';
    line(714, 83, 714, 98, '#e5737d', 2);
    text(796, 264, 2, 'THE EXCAVATED AREA TO BE SLOPED AND PROTECTED AS REQUIRED', '#b0404a');
    text(913, 257, 2, 'SITE BOUNDARY LINE', '#b0404a');
    text(784, 278, 4, 'STABILIZATION PILES LAYOUT @ BASEMENT FLOOR LVL.', '#eee', 'text-decoration="underline"');
    text(674, 94, 5, '[-][Top][2D Wireframe]', '#b8bcc0');

    // axis marker
    line(680, 284, 680, 308, '#aaa', 0.8);
    line(680, 308, 703, 308, '#aaa', 0.8);
    s += '<rect x="678" y="306" width="4" height="4" fill="none" stroke="#aaa" stroke-width=".8"/>';
    text(681, 283, 8, 'Y', '#bbb');
    text(705, 307, 8, 'X', '#bbb');

    // cursor
    line(961, 227, 992, 227, '#ccc');
    line(976, 211, 976, 242, '#ccc');
    s += '<path d="M976 227l4 7-2 0 1 4-2 0-1-4z" fill="#fff"/>';

    // pile elevation
    line(1013, 83, 1013, 236);
    line(1040, 83, 1040, 236);
    line(1013, 236, 1040, 236);
    for (const x of [1016, 1022, 1029, 1036]) line(x, 83, x, 234, '#fff', 1);
    for (let y = 87; y < 234; y += 6.2) line(1016, y + 1, 1037, y - 2, '#e8e8e8', 1);
    for (const y of [100, 143, 186, 229]) line(1016, y, 1037, y, '#c012c8', 1.4);
    line(1009, 128, 1044, 116, '#ddd', 0.9);
    text(1047, 102, 4, '21');
    text(1044, 107, 4, '(7500)');
    text(1043, 149, 4, '16# STIFFNER RING');
    text(1043, 154, 4, '@ 1.50M C/C');
    text(1044, 171, 4, '10#20T');
    text(1006, 179, 5, '75');
    text(1041, 204, 5, '75');
    text(1044, 236, 4, '10.00 LVL');
    line(1044, 172, 1058, 172);
    text(1021, 246, 5, '7500');
    line(1013, 243, 1013, 246);
    line(1040, 243, 1040, 246);
    s += '<circle cx="1027" cy="261" r="13" fill="#1d2831" stroke="#eee" stroke-width=".8"/><circle cx="1027" cy="261" r="8" fill="none" stroke="#eee" stroke-width="7" stroke-dasharray="2.600 1.600"/>';
    text(993, 285, 5, 'TYP. DETAIL FOR PILE-P1', '#fff', 'font-weight="bold" text-decoration="underline"');

    // shaft and raft section
    dim(1127, 83, 130, 98, '6.000');
    dim(1099, 138, 217, 170, '7.400');
    dim(1093, 138, 299, 225, '15.000');
    dim(1149, 139, 187, 162, '4.500');
    dim(1214, 130, 187, 158, '5.400');
    line(1088, 138, 1110, 138);
    line(1199, 83, 1199, 187);
    line(1203, 83, 1203, 187);
    line(1236, 83, 1236, 223);
    line(1131, 130, 1236, 130, '#ccc', 1);
    line(1131, 132, 1199, 132);
    line(1131, 139, 1199, 139);
    line(1203, 133, 1236, 133);
    line(1203, 136, 1236, 136);
    line(1131, 187, 1237, 187, '#ddd', 1);
    line(1132, 184, 1199, 184, '#0ba6c8', 1);
    s += '<rect x="1131" y="188" width="54" height="7" fill="url(#grain)"/><rect x="1178" y="201" width="59" height="14" fill="url(#grain)"/>';
    rect(1174, 195, 4, 20, '#c8c8c8');
    line(1099, 217, 1237, 217, '#aaa', 0.7, 'stroke-dasharray="6 1"');
    s += '<rect x="1131" y="139" width="3" height="48" fill="url(#grain)"/>';
    rect(1123.5, 132, 7, 120, 'none', '#0b8fa8');
    rect(1204.5, 217, 7, 81, 'none', '#0b8fa8');
    line(1093, 299, 1155, 299, '#0b8f96', 1);
    for (const [x, y, w, h] of [[1123, 131, 4, 8], [1129, 124, 6, 7], [1178, 131, 4, 7], [1198, 115, 6, 4], [1162, 180, 8, 3], [1163, 188, 4, 6], [1178, 188, 6, 6], [1200, 190, 4, 10], [1200, 205, 4, 8], [1120, 200, 4, 7], [1134, 204, 3, 8]]) rect(x, y, w, h, '#0bb0dc');
    text(1148, 129, 3, 'APEX RAISED @ SLAB LVL', '#fff', 'font-weight="bold"');
    text(1159, 143, 3, 'Beam Bottom Slab', '#ddd');
    text(1160, 168, 3, 'BASEMENT PARKING', '#ddd');
    text(1103, 137, 3, 'BASEMENT', '#fff', 'font-weight="bold"');
    text(1103, 187, 3, 'BASEMENT', '#fff', 'font-weight="bold"');
    text(1105, 201, 3, '+0.875', '#fff', 'font-weight="bold"');
    text(1105, 216, 3, '+7.400', '#fff', 'font-weight="bold"');
    text(1133, 199, 3, 'P.C.C. 75MM THK (M-15)');
    text(1161, 220, 3, 'P.C.C. 75MM THK (M-15)');
    text(1148, 215, 3, '+7.400', '#fff', 'font-weight="bold"');
    text(1135, 165, 3, 'WALL', '#fff');
    text(1213, 210, 4, 'RAFT', '#fff', 'font-weight="bold"');
    text(1136, 263, 3, 'TYPICAL JUNCTION OF SHAFT &amp; RAFT', '#1ce0e0', 'font-weight="bold" text-decoration="underline"');
    line(1233, 168, 1240, 164, '#ccc', 1);

    // title block
    s += '<rect x="1246" y="83" width="28" height="57" fill="url(#notes)"/>';
    s += '<path d="M1244.500 83V307.500H1275M1245 140H1275M1245 171H1275M1245 176H1275M1245 181H1275M1245 186H1275M1245 191H1275M1245 197H1275M1245 203H1275M1245 211H1275M1245 220H1275M1245 229H1275M1245 238H1275M1245 246H1275M1245 281H1275M1245 287H1275M1245 293H1275M1245 300H1275" stroke="#c4c8cb" fill="none"/>';
    for (const [y, t] of [[217, 'TITLE'], [225, 'PROJECT'], [234, 'CLIENT'], [243, 'ARCHITECT']]) text(1247, y, 3, t, '#bbb');
    rect(1256, 253, 15, 14, '#f50c14');
    s += '<rect x="1259" y="168" width="13" height="93" fill="#999ca2" opacity=".45"/>';
    s += '<circle cx="1246" cy="119" r="17" fill="none" stroke="#8a929a" stroke-width="3" opacity=".5"/><rect x="1238" y="112" width="16" height="14" fill="#a8acb0" opacity=".8"/><rect x="1237" y="148" width="20" height="7" rx="2" fill="#777d84"/>';
    text(1225, 122, 6, 'W', '#aaa');
    text(1239, 153, 4, 'WCS', '#aaa');

    // sheet edge under the command line
    line(674, 311, 794, 311, '#101070', 3);
    line(674, 313, 1275, 313, '#a02030', 1);

    return `
      <svg viewBox="674 83 601 230" role="img" aria-label="Pile drawing">
        <defs>
          <pattern id="grain" width="5" height="5" patternUnits="userSpaceOnUse"><rect width="5" height="5" fill="#3c444b"/><path d="M0 0h1v1H0zM3 1h1v1H3zM1 3h1v1H1zM4 4h1v1H4z" fill="#ccc"/></pattern>
          <pattern id="notes" width="23" height="9" patternUnits="userSpaceOnUse"><path d="M0 1h14M16 1h5M1 4h7M10 4h12M0 7h18" stroke="#e8eaec" stroke-width="2"/></pattern>
        </defs>${s}
      </svg>
    `;
  }
}

class CadWindow extends UiElement {
  css() {
    return `
      :host { display: block; position: absolute; left: 671px; right: 2px; top: 4px; --bar: 17px; --text: 6px; --icon: 10px; --tray: 7px; --small: 5px; --line: 8px; --count: 4px; }
      .frame { position: relative; border: 0 solid #c9cdd2; border-width: 2px 3px 4px 2px; border-top-color: #f0dada; }
      .command {
        position: absolute; left: 20%; width: 60%; bottom: 14px; height: 11px; display: flex; align-items: center; gap: 4px;
        background: #c3c5ca; color: #777; font: italic 5px "Liberation Mono", monospace;
      }
      .command .x { width: 24px; height: 11px; display: flex; align-items: center; justify-content: space-evenly; background: #5d6064; color: #ddd; font-style: normal; }
      .command input { flex: 1; }
      .command input::placeholder { color: #777; opacity: 1; }
      .status { height: 13px; display: flex; align-items: center; gap: 4px; padding: 0 3px 0 6px; background: #2f3134; color: #ccc; font-size: 5px; }
      .tab { padding: 0 5px; background: #4a4c4f; color: #aaa; border-radius: 0 0 4px 4px; line-height: 9px; }
      .tab.on { background: #8c8e91; color: #fff; font-weight: bold; }
      .gap { flex: 1; }
    `;
  }

  html() {
    const tools = ['snap', 'snap', 'down', 'line', 'ring', 'down', 'line', 'down', 'line', 'blue', 'down', 'person', 'letter', 'letter'];
    return `
      <div class="frame">
        <cad-ribbon></cad-ribbon>
        <cad-drawing></cad-drawing>
        <label class="command"><span class="x"><span>×</span>${icon('pencil', 6)}</span>${icon('more', 6)}<input aria-label="Command" placeholder="Type a command"></label>
        <div class="status">
          <button class="tab on">Model</button><button class="tab">Layout2</button><span>+</span><span class="gap"></span>
          <span>MODEL</span>${tools.map(t => icon(t, 7)).join('')}<span>1:1</span>${['ring', 'down', 'move', 'dimension', 'blue', 'camera', 'photos', 'lines'].map(t => icon(t, 7)).join('')}
        </div>
      </div>
      <task-bar time="10:58 PM" active="autocad"></task-bar>
    `;
  }
}

// Big caption with a white outline, laid over the sheet
class BannerTitle extends UiElement {
  css() {
    return `
      :host {
        display: block; position: absolute; left: 0; right: 0; top: 394px; text-align: center;
        font: bold 64px/76px "DejaVu Sans", sans-serif; color: #000; white-space: nowrap;
        -webkit-text-stroke: 2px #000;
        text-shadow: 6px 0 #fff, -6px 0 #fff, 0 6px #fff, 0 -6px #fff, 5px 5px #fff, -5px 5px #fff, 5px -5px #fff, -5px -5px #fff,
          3px 6px #fff, -3px 6px #fff, 3px -6px #fff, -3px -6px #fff, 3px 3px #fff, -3px -3px #fff;
      }
    `;
  }

  html() {
    return '<slot></slot>';
  }
}

customElements.define('title-bar', TitleBar);
customElements.define('ribbon-group', RibbonGroup);
customElements.define('excel-ribbon', ExcelRibbon);
customElements.define('formula-bar', FormulaBar);
customElements.define('sheet-grid', SheetGrid);
customElements.define('sheet-tabs', SheetTabs);
customElements.define('status-bar', StatusBar);
customElements.define('task-bar', TaskBar);
customElements.define('cad-panel', CadPanel);
customElements.define('cad-ribbon', CadRibbon);
customElements.define('cad-drawing', CadDrawing);
customElements.define('cad-window', CadWindow);
customElements.define('banner-title', BannerTitle);
</script>
</body>
</html>
